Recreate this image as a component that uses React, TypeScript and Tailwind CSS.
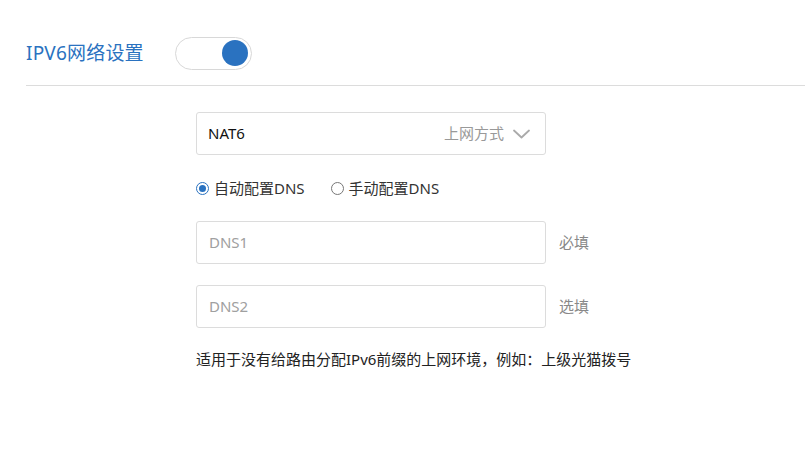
import { useState } from 'react';

const font = { fontFamily: '"Noto Sans", "Noto Sans CJK SC", sans-serif' };

export default function App() {
  const [enabled, setEnabled] = useState(true);
  const [mode, setMode] = useState<'auto' | 'manual'>('auto');

  return (
    <div className="w-[805px] h-[454px] bg-white text-[#333]" style={font}>
      {/* Header row */}
      <div className="ml-[26px] h-[86px] pt-[21px] flex items-center gap-[31px] border-b border-[#dcdcdc]">
        <h2 className="text-[19px] text-[#2a72c0] leading-none tracking-[0.2px]">IPV6网络设置</h2>
        <button
          onClick={() => setEnabled(!enabled)}
          className="w-[77px] h-[33px] rounded-full border border-[#d8d8d8] bg-white flex items-center px-[3px] justify-end"
        >
          <span className="w-[26px] h-[26px] rounded-full bg-[#2a72c0]" />
        </button>
      </div>

      <div className="ml-[196px] pt-[26px] flex flex-col">
        {/* Select */}
        <div className="w-[350px] h-[43px] border border-[#dcdcdc] rounded-[3px] flex items-center pl-[11px] pr-[15px]">
          <span className="text-[15px] text-[#111] flex-1">NAT6</span>
          <span className="text-[15px] text-[#999] mr-[9px]">上网方式</span>
          <svg width="17" height="10" viewBox="0 0 17 10" fill="none">
            <path d="M1 1.5l7.5 7 7.5-7" stroke="#aaa" strokeWidth="1.8" strokeLinecap="round" strokeLinejoin="round" />
          </svg>
        </div>

        {/* Radios */}
        <div className="flex items-center mt-[22px] h-[22px] text-[15px] text-[#333]">
          <label className="flex items-center cursor-pointer" onClick={() => setMode('auto')}>
            <span className={`w-[13px] h-[13px] rounded-full border flex items-center justify-center mr-[5px] ${mode === 'auto' ? 'border-[#2a72c0]' : 'border-[#777]'}`}>
              {mode === 'auto' && <span className="w-[7px] h-[7px] rounded-full bg-[#2a72c0]" />}
            </span>
            自动配置DNS
          </label>
          <label className="flex items-center cursor-pointer ml-[26px]" onClick={() => setMode('manual')}>
            <span className={`w-[13px] h-[13px] rounded-full border flex items-center justify-center mr-[5px] ${mode === 'manual' ? 'border-[#2a72c0]' : 'border-[#777]'}`}>
              {mode === 'manual' && <span className="w-[7px] h-[7px] rounded-full bg-[#2a72c0]" />}
            </span>
            手动配置DNS
          </label>
        </div>

        {/* DNS inputs */}
        <div className="flex items-center mt-[22px] gap-[13px]">
          <div className="w-[350px] h-[43px] border border-[#dcdcdc] rounded-[3px] flex items-center pl-[12px] text-[15px] text-[#a0a0a0]">
            DNS1
          </div>
          <span className="text-[15px] text-[#888]">必填</span>
        </div>
        <div className="flex items-center mt-[21px] gap-[13px]">
          <div className="w-[350px] h-[43px] border border-[#dcdcdc] rounded-[3px] flex items-center pl-[12px] text-[15px] text-[#a0a0a0]">
            DNS2
          </div>
          <span className="text-[15px] text-[#888]">选填</span>
        </div>

        <p className="mt-[20px] text-[15px] text-[#222]">适用于没有给路由分配IPv6前缀的上网环境，例如：上级光猫拨号</p>
      </div>
    </div>
  );
}
